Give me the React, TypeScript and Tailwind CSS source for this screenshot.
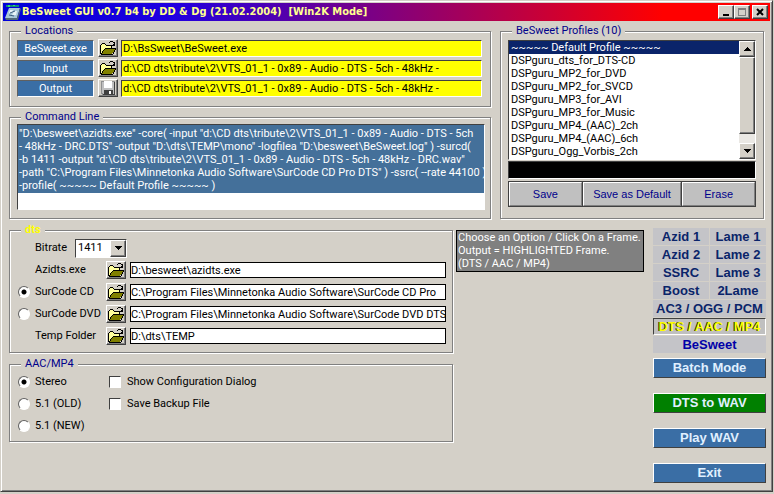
import { ReactNode } from "react";

const PROFILES = [
  "~~~~~ Default Profile ~~~~~",
  "DSPguru_dts_for_DTS-CD",
  "DSPguru_MP2_for_DVD",
  "DSPguru_MP2_for_SVCD",
  "DSPguru_MP3_for_AVI",
  "DSPguru_MP3_for_Music",
  "DSPguru_MP4_(AAC)_2ch",
  "DSPguru_MP4_(AAC)_6ch",
  "DSPguru_Ogg_Vorbis_2ch",
];

const COMMAND_LINE = [
  '"D:\\besweet\\azidts.exe" -core( -input "d:\\CD dts\\tribute\\2\\VTS_01_1 - 0x89 - Audio - DTS - 5ch',
  '- 48kHz - DRC.DTS" -output "D:\\dts\\TEMP\\mono" -logfilea "D:\\besweet\\BeSweet.log" ) -surcd(',
  '-b 1411 -output "d:\\CD dts\\tribute\\2\\VTS_01_1 - 0x89 - Audio - DTS - 5ch - 48kHz - DRC.wav"',
  '-path "C:\\Program Files\\Minnetonka Audio Software\\SurCode CD Pro DTS" ) -ssrc( --rate 44100 )',
  "-profile( ~~~~~ Default Profile ~~~~~ )",
].join("\n");

const LOCATIONS = [
  { label: "BeSweet.exe", value: "D:\\BsSweet\\BeSweet.exe", save: false },
  {
    label: "Input",
    value: "d:\\CD dts\\tribute\\2\\VTS_01_1 - 0x89 - Audio - DTS - 5ch - 48kHz -",
    save: false,
  },
  {
    label: "Output",
    value: "d:\\CD dts\\tribute\\2\\VTS_01_1 - 0x89 - Audio - DTS - 5ch - 48kHz -",
    save: true,
  },
];

const DTS_PATHS = [
  { label: "Azidts.exe", value: "D:\\besweet\\azidts.exe", radio: false },
  {
    label: "SurCode CD",
    value: "C:\\Program Files\\Minnetonka Audio Software\\SurCode CD Pro",
    radio: true,
  },
  {
    label: "SurCode DVD",
    value: "C:\\Program Files\\Minnetonka Audio Software\\SurCode DVD DTS",
    radio: true,
  },
  { label: "Temp Folder", value: "D:\\dts\\TEMP", radio: false },
];

const MENU = [
  "Azid 1",
  "Lame 1",
  "Azid 2",
  "Lame 2",
  "SSRC",
  "Lame 3",
  "Boost",
  "2Lame",
];

const ACTIONS = ["Batch Mode", "DTS to WAV", "Play WAV", "Exit"];

function Group({
  title,
  className = "",
  titleClassName = "text-[#00008b]",
  children,
}: {
  title: string;
  className?: string;
  titleClassName?: string;
  children: ReactNode;
}) {
  return (
    <fieldset
      className={`min-w-0 border border-[#808080] pl-[7px] shadow-[1px_1px_0_#fff,inset_1px_1px_0_#fff] ${className}`}
    >
      <legend
        className={`ml-1 h-[14px] bg-[#d4d0c8] px-1 leading-[14px] ${titleClassName}`}
      >
        {title}
      </legend>
      {children}
    </fieldset>
  );
}

function FolderIcon() {
  return (
    <svg width="16" height="14" viewBox="0 0 16 14" shapeRendering="crispEdges">
      <path d="M1 4h1V3h3v1h6v3H5v1H4v1H3v2H2v2H1z" fill="#ffff9c" />
      <path d="M5 8h10v1h-1v2h-1v1h-1v1H2v-1h1v-2h1V9h1z" fill="#808000" />
      <path
        d="M0 4h1v9H0zM1 3h1v1H1zM2 2h3v1H2zM5 3h1v1H5zM6 4h5v1H6zM11 4h1v3h-1zM5 7h11v1H5zM4 8h1v1H4zM3 9h1v1H3zM2 10h1v2H2zM1 12h1v1h11v1H1zM15 8h1v1h-1zM14 9h1v2h-1zM13 11h1v2h-1z"
        fill="#000"
      />
      <path
        d="M9 1h1v1H9zM10 0h3v1h-3zM13 1h1v1h-1zM14 1h1v4h-4V4h2V3h1z"
        fill="#000"
      />
    </svg>
  );
}

function DiskIcon() {
  return (
    <svg width="16" height="14" viewBox="0 0 16 14" shapeRendering="crispEdges">
      <path d="M1 0h14v14H2l-1-1z" fill="#909090" />
      <path d="M2 1h12v12H3l-1-1z" fill="#c0c0c0" />
      <path d="M4 0h8v7H4z" fill="#fff" />
      <path d="M4 9h9v5H4z" fill="#404040" />
      <path d="M9 10h2v3H9z" fill="#fff" />
      <path d="M14 1h1v13H3v-1h11z" fill="#404040" />
    </svg>
  );
}

function BrowseButton({ label, save }: { label: string; save?: boolean }) {
  return (
    <button
      aria-label={label}
      className="flex h-[18px] w-5 shrink-0 items-center justify-center border border-t-white border-r-[#404040] border-b-[#404040] border-l-white bg-[#d4d0c8] shadow-[inset_-1px_-1px_0_#808080]"
    >
      {save ? <DiskIcon /> : <FolderIcon />}
    </button>
  );
}

function Radio({
  id,
  name,
  checked,
}: {
  id: string;
  name: string;
  checked?: boolean;
}) {
  return (
    <input
      type="radio"
      id={id}
      name={name}
      defaultChecked={checked}
      className="size-3 shrink-0 appearance-none rounded-full border border-t-[#606060] border-r-white border-b-white border-l-[#606060] bg-white checked:bg-[radial-gradient(circle,#000_2px,#fff_3px)]"
    />
  );
}

function TitleBar() {
  const button =
    "flex h-[14px] w-4 items-center justify-center border border-t-white border-r-[#404040] border-b-[#404040] border-l-white bg-[#d4d0c8] shadow-[inset_-1px_-1px_0_#808080]";
  return (
    <header className="flex h-[18px] items-center bg-[linear-gradient(to_right,#0000d8,#2000e0_22%,#ff0000_86%)] pr-[2px] pl-[2px]">
      <svg width="16" height="16" viewBox="0 0 16 16">
        <path d="M4 4h11l-3 10H0z" fill="#a8c8d8" />
        <path d="M0 14h12l3-10 1 1-3 11H1z" fill="#506878" />
        <path d="M5 6h3l-1 3H4zM9 7h3l-1 4H7z" fill="#e8f4f8" />
        <path d="M5 9l5-2M4 11l5 1" stroke="#406080" />
        <path d="M1 1h13v2H1z" fill="#108878" />
        <path d="M3 1h2v2H3zM8 1h2v1H8z" fill="#30e070" />
      </svg>
      <h1 className="ml-px flex-1 truncate font-['DejaVu_Sans_Condensed','DejaVu_Sans',sans-serif] text-[11px] font-bold whitespace-pre text-[#ffff90]">
        {"BeSweet GUI v0.7 b4 by DD & Dg (21.02.2004)  [Win2K Mode]"}
      </h1>
      <button aria-label="Minimize" className={button}>
        <svg width="10" height="10" shapeRendering="crispEdges">
          <path d="M2 7h6v2H2z" />
        </svg>
      </button>
      <button aria-label="Maximize" className={button}>
        <svg width="10" height="10" shapeRendering="crispEdges">
          <path d="M1 1h8v8H1zM2 3v5h6V3z" fill="#808080" fillRule="evenodd" />
        </svg>
      </button>
      <button aria-label="Close" className={`ml-[2px] ${button}`}>
        <svg width="10" height="10">
          <path d="M2 2l6 6M8 2l-6 6" stroke="#000" strokeWidth="2" />
        </svg>
      </button>
    </header>
  );
}

function ScrollBar() {
  const part =
    "border border-t-white border-r-[#404040] border-b-[#404040] border-l-white bg-[#d4d0c8] shadow-[inset_-1px_-1px_0_#808080]";
  return (
    <div className="flex w-4 flex-col bg-[#eae8e4]">
      <button
        aria-label="Scroll up"
        className={`flex h-4 items-center justify-center ${part}`}
      >
        <svg width="7" height="4" shapeRendering="crispEdges">
          <path d="M3 0h1v1h1v1h1v1h1v1H0V3h1V2h1V1h1z" />
        </svg>
      </button>
      <div className={`h-[77px] ${part}`} />
      <div className="flex-1" />
      <button
        aria-label="Scroll down"
        className={`flex h-4 items-center justify-center ${part}`}
      >
        <svg width="7" height="4" shapeRendering="crispEdges">
          <path d="M0 0h7v1H6v1H5v1H4v1H3V3H2V2H1V1H0z" />
        </svg>
      </button>
    </div>
  );
}

function Locations() {
  return (
    <Group title="Locations" className="pr-2 pb-[9px]">
      <div className="flex flex-col gap-[2px] pt-px">
        {LOCATIONS.map((location) => (
          <div key={location.label} className="flex items-center">
            <label
              htmlFor={location.label}
              className="h-[17px] w-[77px] shrink-0 border border-t-[#606060] border-r-white border-b-white border-l-[#606060] bg-[#3a6ea5] text-center leading-[15px] text-white"
            >
              {location.label}
            </label>
            <div className="pr-[3px] pl-1">
              <BrowseButton
                label={`Browse ${location.label}`}
                save={location.save}
              />
            </div>
            <input
              id={location.label}
              defaultValue={location.value}
              className="h-[17px] min-w-0 flex-1 border border-t-[#404040] border-r-white border-b-white border-l-[#404040] bg-[#ffff00] px-px text-black outline-none"
            />
          </div>
        ))}
      </div>
    </Group>
  );
}

function CommandLine() {
  return (
    <Group title="Command Line" className="pr-[5px] pb-2">
      <div className="h-[86px] border border-t-[#404040] border-r-white border-b-white border-l-[#404040] bg-white">
        <textarea
          aria-label="Command Line"
          defaultValue={COMMAND_LINE}
          spellCheck={false}
          className="block h-[68px] w-full resize-none overflow-hidden bg-[#44709a] py-[2px] pl-px leading-[13px] whitespace-pre text-white outline-none"
        />
      </div>
    </Group>
  );
}

function Profiles() {
  const button =
    "h-6 border border-t-white border-r-[#808080] border-b-[#808080] border-l-white bg-[#c0c0c0] text-[#00008b]";
  return (
    <Group
      title="BeSweet Profiles (10)"
      className="w-[264px] shrink-0 pr-[7px] pb-[9px]"
    >
      <div className="mt-[2px] flex h-[120px] border border-t-[#404040] border-r-white border-b-white border-l-[#404040] bg-white">
        <select
          size={9}
          aria-label="BeSweet Profiles"
          defaultValue={PROFILES[0]}
          className="min-w-0 flex-1 overflow-hidden bg-white text-black outline-none [scrollbar-width:none]"
        >
          {PROFILES.map((profile) => (
            <option
              key={profile}
              className="h-[13px] min-h-0 p-0 pl-[2px] leading-[13px] checked:bg-linear-to-r checked:from-[#0a246a] checked:to-[#0a246a] checked:text-white"
            >
              {profile}
            </option>
          ))}
        </select>
        <ScrollBar />
      </div>
      <div className="mt-px h-[18px] border border-t-[#404040] border-r-white border-b-white border-l-[#404040] bg-black" />
      <div className="mt-[2px] grid grid-cols-[73fr_99fr_73fr] gap-px border border-[#404040] bg-[#404040] font-['Liberation_Sans',Arial,sans-serif]">
        <button className={button}>Save</button>
        <button className={button}>Save as Default</button>
        <button className={button}>Erase</button>
      </div>
    </Group>
  );
}

function DtsOptions() {
  return (
    <Group
      title="dts"
      titleClassName="font-bold text-[#ffff00]"
      className="pr-[6px] pb-[5px]"
    >
      <div className="flex h-[22px] items-center pl-[18px]">
        <label htmlFor="bitrate" className="w-10">
          Bitrate
        </label>
        <div className="relative h-[19px] w-[52px] border border-t-[#404040] border-r-white border-b-white border-l-[#404040] bg-white">
          <select
            id="bitrate"
            className="h-full w-full appearance-none pl-[2px] outline-none"
          >
            <option>1411</option>
          </select>
          <span className="pointer-events-none absolute inset-y-0 right-0 flex w-4 items-center justify-center border border-t-white border-r-[#404040] border-b-[#404040] border-l-white bg-[#d4d0c8] shadow-[inset_-1px_-1px_0_#808080]">
            <svg width="7" height="4" shapeRendering="crispEdges">
              <path d="M0 0h7v1H6v1H5v1H4v1H3V3H2V2H1V1H0z" />
            </svg>
          </span>
        </div>
      </div>
      {DTS_PATHS.map((path) => (
        <div key={path.label} className="flex h-[22px] items-center">
          <div className="flex w-[18px] shrink-0 pl-px">
            {path.radio && (
              <Radio
                id={`radio-${path.label}`}
                name="surcode"
                checked={path.label === "SurCode CD"}
              />
            )}
          </div>
          <label
            htmlFor={path.radio ? `radio-${path.label}` : path.label}
            className="w-[71px] shrink-0 whitespace-nowrap"
          >
            {path.label}
          </label>
          <BrowseButton label={`Browse ${path.label}`} />
          <input
            id={path.label}
            aria-label={path.label}
            defaultValue={path.value}
            className="ml-1 h-4 min-w-0 flex-1 border border-black bg-white text-black outline-none"
          />
        </div>
      ))}
    </Group>
  );
}

function AacOptions() {
  return (
    <Group title="AAC/MP4" className="pb-[4px]">
      <div className="flex">
        <div className="w-[92px]">
          {["Stereo", "5.1 (OLD)", "5.1 (NEW)"].map((mode) => (
            <div key={mode} className="flex h-[22px] items-center pl-px">
              <Radio id={mode} name="channels" checked={mode === "Stereo"} />
              <label htmlFor={mode} className="pl-[5px]">
                {mode}
              </label>
            </div>
          ))}
        </div>
        <div>
          {["Show Configuration Dialog", "Save Backup File"].map((option) => (
            <div key={option} className="flex h-[22px] items-center">
              <input
                type="checkbox"
                id={option}
                className="size-3 appearance-none border border-t-[#404040] border-r-white border-b-white border-l-[#404040] bg-white checked:bg-[#0a246a]"
              />
              <label htmlFor={option} className="pl-[6px]">
                {option}
              </label>
            </div>
          ))}
        </div>
      </div>
    </Group>
  );
}

function SideMenu() {
  const item = "h-[17px] bg-[#c4c4c8] leading-[17px] whitespace-nowrap";
  return (
    <nav className="w-[113px] shrink-0 font-['Liberation_Sans',Arial,sans-serif] text-[13px] font-bold text-[#0a246a]">
      <div className="grid grid-cols-2 gap-px">
        {MENU.map((label) => (
          <button key={label} className={item}>
            {label}
          </button>
        ))}
        <button className={`col-span-2 ${item}`}>AC3 / OGG / PCM</button>
        <button className="col-span-2 h-[17px] border border-t-[#404040] border-r-white border-b-white border-l-[#404040] bg-[#c0c0c0] leading-[15px] whitespace-nowrap text-[#ffff00] [text-shadow:-1px_0_0_#202000]">
          DTS / AAC / MP4
        </button>
        <button className={`col-span-2 text-[#0000a8] ${item}`}>BeSweet</button>
      </div>
      <div className="mt-[5px] flex flex-col gap-[15px]">
        {ACTIONS.map((action) => (
          <button
            key={action}
            className={`h-5 border border-t-white border-r-[#404040] border-b-[#404040] border-l-white leading-[18px] text-[#e0f0ff] ${
              action === "DTS to WAV" ? "bg-[#008000]" : "bg-[#3a6ea5]"
            }`}
          >
            {action}
          </button>
        ))}
      </div>
    </nav>
  );
}

export default function App() {
  return (
    <div className="flex min-h-screen flex-col bg-[#d4d0c8] pr-px pb-[2px] font-['Roboto','Liberation_Sans',sans-serif] text-[11px] leading-[14px] text-black">
      <main className="flex flex-1 flex-col border border-t-[#d4d0c8] border-r-[#404040] border-b-[#404040] border-l-[#d4d0c8] p-[2px] shadow-[inset_1px_1px_0_#fff,inset_-1px_-1px_0_#808080]">
        <TitleBar />
        <div className="flex gap-[9px] pt-[3px] pr-[6px] pl-[6px]">
          <div className="flex min-w-0 flex-1 flex-col gap-[3px]">
            <Locations />
            <CommandLine />
          </div>
          <Profiles />
        </div>
        <div className="flex gap-[3px] pt-1 pr-1 pl-[6px]">
          <div className="flex min-w-0 flex-1 flex-col gap-[4px]">
            <DtsOptions />
            <AacOptions />
          </div>
          <p className="mt-[7px] w-[188px] shrink-0 self-start border border-black bg-[#808080] pb-[1px] pl-px leading-[13px] whitespace-nowrap text-white">
            Choose an Option / Click On a Frame.
            <br />
            Output = HIGHLIGHTED Frame.
            <br />
            (DTS / AAC / MP4)
          </p>
          <div className="pt-[5px] pl-[6px]">
            <SideMenu />
          </div>
        </div>
      </main>
    </div>
  );
}
